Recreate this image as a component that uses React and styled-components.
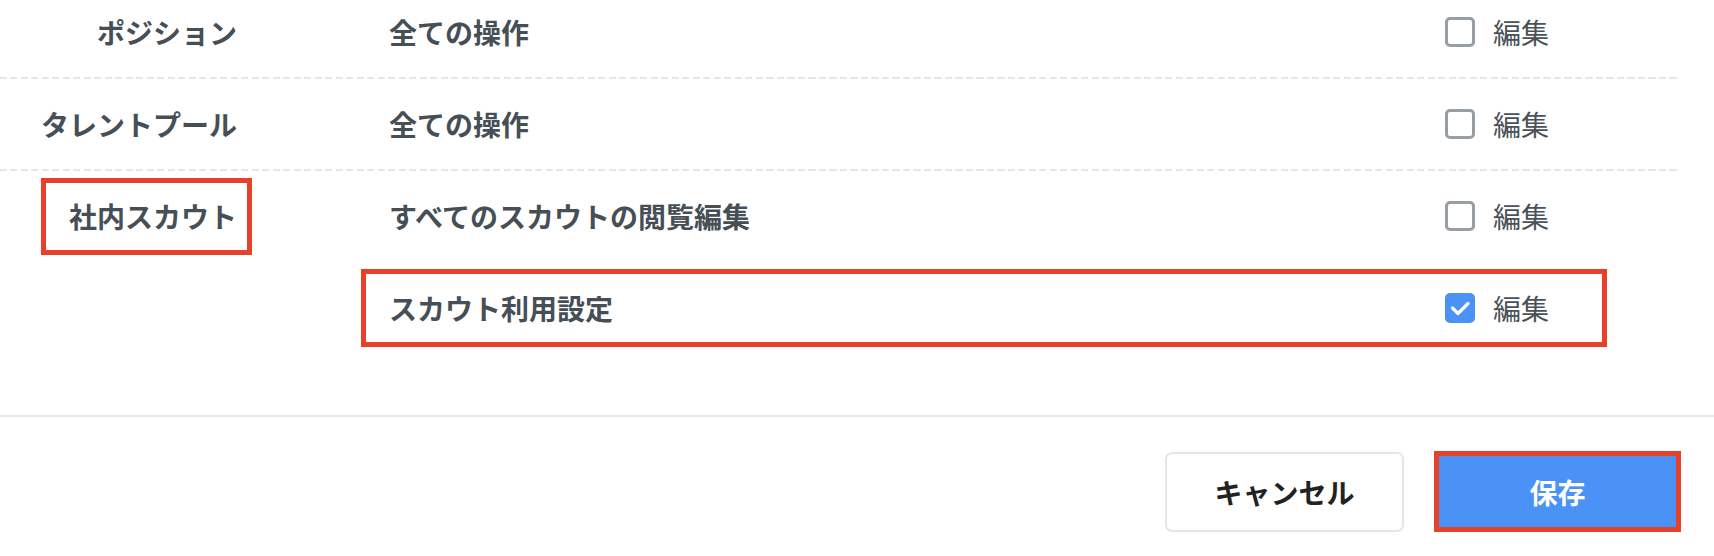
import React from "react";
import styled, { createGlobalStyle } from "styled-components";

const Global = createGlobalStyle`
  html, body { margin: 0; padding: 0; background: #ffffff; }
  body {
    font-family: "Noto Sans CJK JP", "Noto Sans", sans-serif;
    overflow: hidden;
  }
`;

const Page = styled.div`
  width: 1714px;
  height: 556px;
  overflow: hidden;
  background: #fff;
`;

const Table = styled.div`
  width: 1677px;
  margin-top: -13px;
  padding-bottom: 62px;
`;

const Group = styled.div`
  display: flex;
  align-items: flex-start;
  &:not(:last-child) {
    padding-bottom: 2px;
    background: repeating-linear-gradient(
        90deg,
        #e6e6e6 0 7px,
        transparent 7px 10.5px
      )
      left bottom / 100% 2px no-repeat;
  }
`;

const LabelSlot = styled.div`
  width: 252px;
  height: 90px;
  display: flex;
  align-items: center;
  justify-content: flex-end;
  flex-shrink: 0;
`;

const LabelBox = styled.div`
  box-sizing: border-box;
  width: 211px;
  height: 77px;
  border: 5px solid ${(p) => (p.$highlight ? "#e8412a" : "transparent")};
  padding-right: 10px;
  display: flex;
  align-items: center;
  justify-content: flex-end;
  font-size: 28px;
  font-weight: 700;
  color: #464e56;
  white-space: nowrap;
`;

const OpsColumn = styled.div`
  margin-left: 109px;
  width: 1246px;
  display: flex;
  flex-direction: column;
  gap: 2px;
`;

const OpRow = styled.div`
  box-sizing: border-box;
  height: 78px;
  margin: 6px 0;
  border: 5px solid ${(p) => (p.$highlight ? "#e8412a" : "transparent")};
  padding-left: 23px;
  display: grid;
  grid-template-columns: 1056px 1fr;
  align-items: center;
`;

const OpName = styled.div`
  font-size: 28px;
  font-weight: 700;
  color: #464e56;
  white-space: nowrap;
`;

const CheckLabel = styled.label`
  display: flex;
  align-items: center;
  gap: 18px;
  font-size: 28px;
  font-weight: 400;
  color: #4a5159;
  white-space: nowrap;
`;

const Box = styled.span`
  box-sizing: border-box;
  width: 30px;
  height: 30px;
  border-radius: 5px;
  border: ${(p) => (p.$checked ? "none" : "3px solid #979ea6")};
  background: ${(p) => (p.$checked ? "#4b92f6" : "#fff")};
  display: inline-flex;
  align-items: center;
  justify-content: center;
  flex-shrink: 0;
`;

const Footer = styled.div`
  border-top: 2px solid #e8e8e8;
  padding: 34px 33px 0 0;
  display: flex;
  justify-content: flex-end;
  align-items: center;
  gap: 30px;
`;

const Button = styled.button`
  box-sizing: border-box;
  font-family: "Noto Sans CJK JP", "Noto Sans", sans-serif;
  font-size: 28px;
  font-weight: 700;
  display: flex;
  align-items: center;
  justify-content: center;
  cursor: pointer;
  ${(p) =>
    p.$primary
      ? `
    width: 247px;
    height: 81px;
    background: #4b92f6;
    color: #ffffff;
    border: 5px solid #e8412a;
    border-radius: 0;
  `
      : `
    width: 239px;
    height: 80px;
    background: #ffffff;
    color: #222222;
    border: 2px solid #e3e6ea;
    border-radius: 7px;
  `}
`;

function Checkbox({ checked }) {
  return (
    <CheckLabel>
      <Box $checked={checked}>
        {checked && (
          <svg width="30" height="30" viewBox="0 0 30 30">
            <polyline
              points="7.5,15 13,20.5 23,10.5"
              fill="none"
              stroke="#fff"
              strokeWidth="3.2"
              strokeLinecap="round"
              strokeLinejoin="round"
            />
          </svg>
        )}
      </Box>
      編集
    </CheckLabel>
  );
}

const groups = [
  { label: "ポジション", ops: [{ name: "全ての操作" }] },
  { label: "タレントプール", ops: [{ name: "全ての操作" }] },
  {
    label: "社内スカウト",
    highlight: true,
    ops: [
      { name: "すべてのスカウトの閲覧編集" },
      { name: "スカウト利用設定", checked: true, highlight: true },
    ],
  },
];

export default function App() {
  return (
    <Page>
      <Global />
      <Table>
        {groups.map((g) => (
          <Group key={g.label}>
            <LabelSlot>
              <LabelBox $highlight={g.highlight}>{g.label}</LabelBox>
            </LabelSlot>
            <OpsColumn>
              {g.ops.map((op) => (
                <OpRow key={op.name} $highlight={op.highlight}>
                  <OpName>{op.name}</OpName>
                  <Checkbox checked={!!op.checked} />
                </OpRow>
              ))}
            </OpsColumn>
          </Group>
        ))}
      </Table>
      <Footer>
        <Button>キャンセル</Button>
        <Button $primary>保存</Button>
      </Footer>
    </Page>
  );
}
